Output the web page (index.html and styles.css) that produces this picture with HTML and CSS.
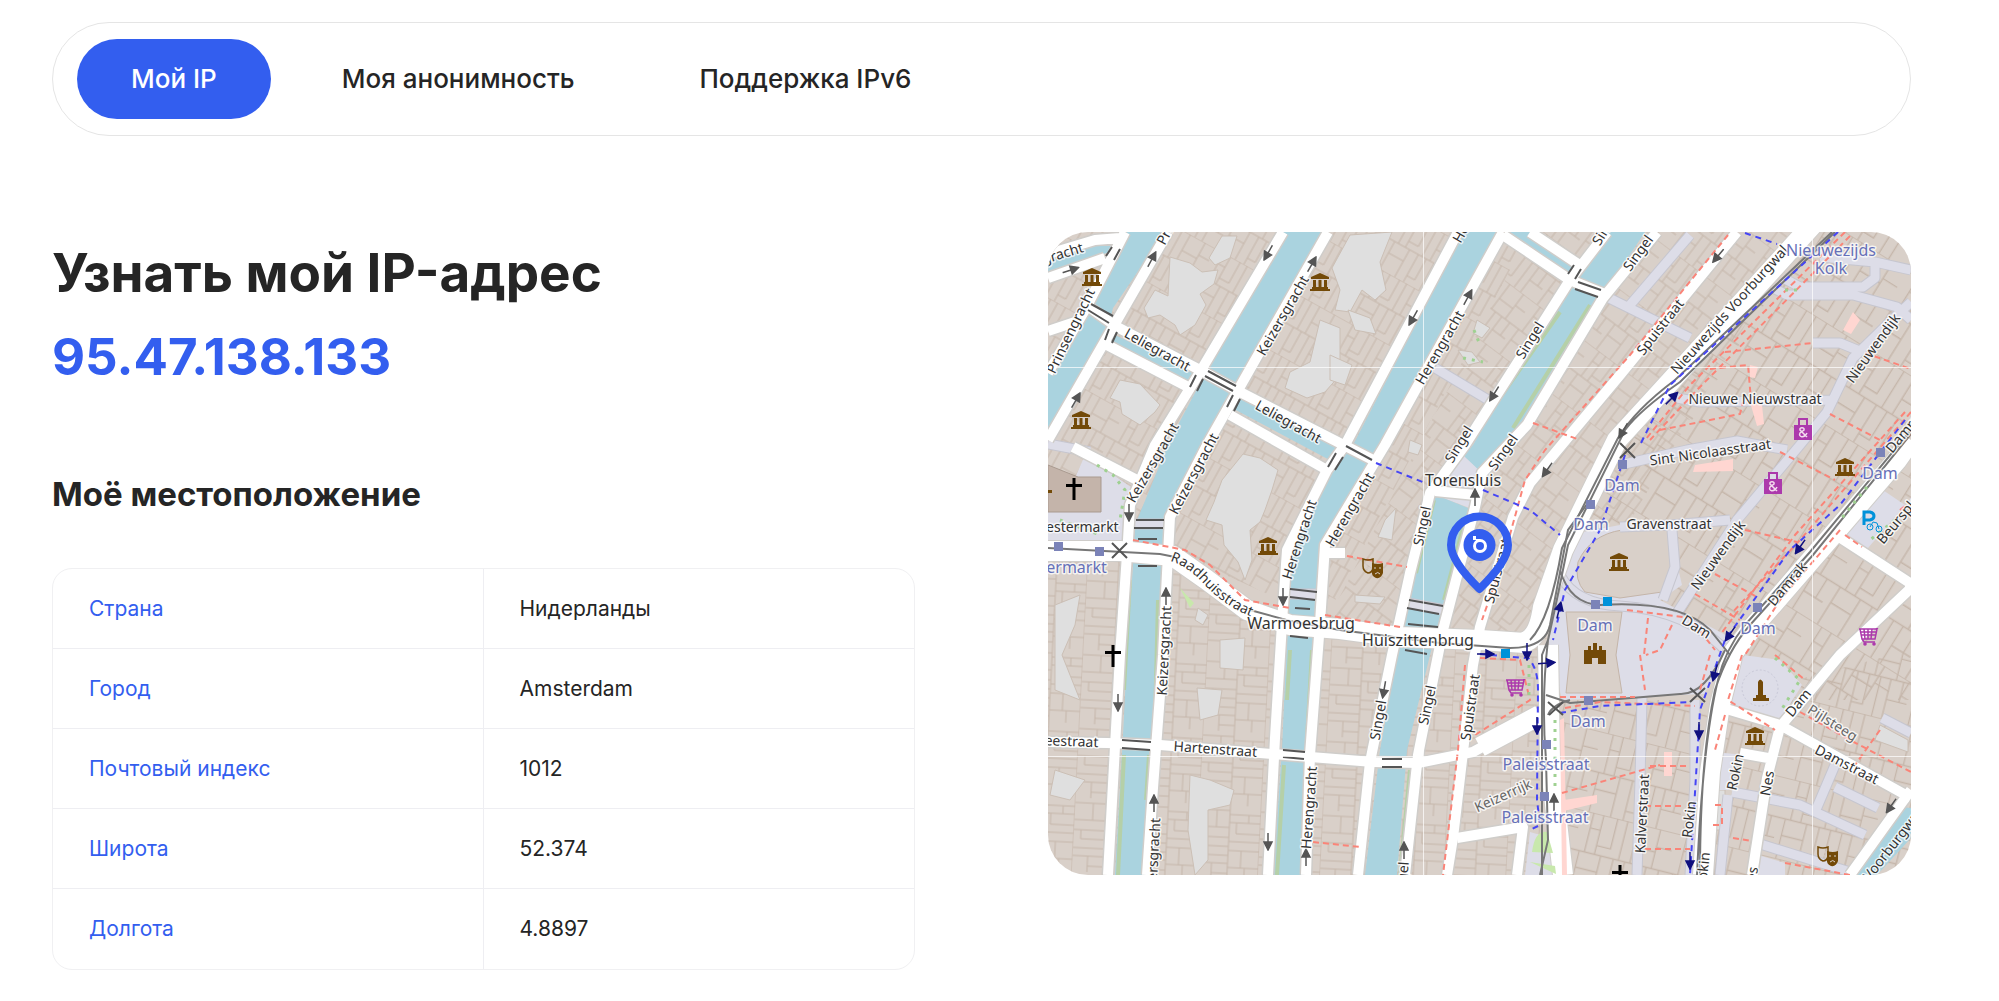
FILE: index.html
```html
<!DOCTYPE html>
<html lang="ru">
<head>
<meta charset="utf-8">
<meta name="viewport" content="width=device-width, initial-scale=1">
<title>Мой IP</title>
<link rel="stylesheet" href="styles.css">
</head>
<body>
<div class="page">
  <nav class="tabs">
    <a class="tab tab-active" href="#ip" aria-current="page">Мой IP</a>
    <a class="tab" href="#anonymity">Моя анонимность</a>
    <a class="tab" href="#ipv6">Поддержка IPv6</a>
  </nav>
  <main class="content">
    <section class="info">
      <h1 class="title">Узнать мой IP-адрес</h1>
      <p class="ip">95.47.138.133</p>
      <h2 class="subtitle">Моё местоположение</h2>
      <table class="facts">
        <tr><th scope="row">Страна</th><td>Нидерланды</td></tr>
        <tr><th scope="row">Город</th><td>Amsterdam</td></tr>
        <tr><th scope="row">Почтовый индекс</th><td>1012</td></tr>
        <tr><th scope="row">Широта</th><td>52.374</td></tr>
        <tr><th scope="row">Долгота</th><td>4.8897</td></tr>
      </table>
    </section>
    <svg class="map" viewBox="1048 232 863 643" role="img" aria-label="Amsterdam">
      <defs>
        <pattern id="houses" width="74" height="62" patternUnits="userSpaceOnUse">
          <path class="parcel" d="M0 0H74M0 31H74M9 0V31M17 0V31M28 0V24H17M36 0V31M45 0V31M45 18H62M62 0V31M9 12H17M62 14H74M5 31V62M5 44H22M22 31V62M32 31V62M41 31V55H32M50 31V62M58 31V62M58 47H74M68 31V47"/>
        </pattern>
        <pattern id="houses-nw" href="#houses" patternTransform="rotate(29)"/>
        <pattern id="houses-w" href="#houses" patternTransform="rotate(93)"/>
        <pattern id="houses-c" href="#houses" patternTransform="rotate(37)"/>
        <pattern id="houses-e" href="#houses" patternTransform="scale(1.4) rotate(32)"/>
        <pattern id="houses-se" href="#houses" patternTransform="scale(1.3) rotate(14)"/>
        <symbol id="museum" viewBox="0 0 20 18"><path d="M10 0 19 4V6H1V4ZM3 7H6V14H3ZM8.500 7H11.500V14H8.500ZM14 7H17V14H14ZM2 14H18V16H20V18H0V16H2Z" fill="#734a08"/></symbol>
        <symbol id="cross" viewBox="0 0 16 22"><path d="M6.500 0H9.500V6H16V9H9.500V22H6.500V9H0V6H6.500Z" fill="#000"/></symbol>
        <symbol id="cart" viewBox="0 0 20 18"><path d="M0 1H17L19 0M1 1 3 11H16L18 1M2 4H17M2 7H17M5 1 6 11M9 1V11M13 1 12 11M3 11 5 14H16" fill="none" stroke="#ac39ac" stroke-width="1.500"/><circle cx="6" cy="16" r="1.800" fill="#ac39ac"/><circle cx="15" cy="16" r="1.800" fill="#ac39ac"/></symbol>
        <symbol id="bag" viewBox="0 0 18 22"><path d="M0 7H18V22H0Z" fill="#ac39ac"/><path d="M5 7V1H13V7" fill="none" stroke="#ac39ac" stroke-width="2"/><path d="M13 19 6 12C5 9 11 9 10 12L6 15C4 19 10 21 13 15" fill="none" stroke="#f3dcee" stroke-width="1.500"/></symbol>
        <symbol id="masks" viewBox="0 0 22 21"><path d="M1 1Q6 3 11 1V10Q10 15 6 15Q1 13 1 8Z" fill="none" stroke="#734a08" stroke-width="1.500"/><path d="M10 5Q16 7 21 5V15Q19 21 14 20Q9 18 10 13Z" fill="#734a08"/><path d="M12 10H14M17 10H19M13 16Q16 13 18 16M3 6H5M7 6H9M4 11Q6 9 8 10" stroke="#d9d0c9" fill="none"/></symbol>
        <symbol id="arrow" viewBox="-6 -9 12 18"><path d="M0 9V0M0-8 4 0H-4Z" fill="currentColor" stroke="currentColor" stroke-width="1.500"/></symbol>
        <path id="raadhuis" d="M1170 561Q1187 566 1203 583Q1224 606 1252 617L1280 622"/>
        <path id="damstraat" d="M1814 753Q1845 769 1890 792"/>
        <path id="ped" d="M1911 302 1897 315 1853 358 1827 412 1800 445 1737 520 1677 613M1783 278 1800 287H1863L1875 278V262M1820 257 1875 262 1911 270M1773 288 1787 295H1853L1897 307 1911 320M1813 343H1840L1862 352M1677 398 1700 402 1833 400M1690 235 1630 305M1607 297 1690 338M1620 465 1687 450 1737 441 1787 450M1620 527 1670 525 1730 520M1672 530 1675 567 1663 600M1435 368 1490 401M1642 698 1640 780 1637 875M1695 700 1695 780 1690 875M1728 795 1720 875M1732 792 1800 805 1865 835M1835 765 1815 812M1835 787 1878 808M1757 843 1850 872M1882 718 1911 733M1560 575Q1575 604 1620 606 1690 610 1730 655M1048 444 1090 452M1130 524H1170M1290 594H1320M1408 603 1445 610"/>
        <g id="streets">
          <path d="M1125 232 1085 310 1048 373M1168 232 1116 322 1048 440M1090 308 1117 327 1200 370 1240 392 1373 460M1107 345 1190 388M1230 415 1327 470M1048 278 1105 258M1048 254 1095 240 1120 238M1048 331 1075 322"/>
          <path d="M1283 232 1200 372 1155 445 1130 505 1128 540 1120 655 1108 875M1328 232 1237 392 1207 445 1170 517 1167 573 1163 655 1153 788 1147 875"/>
          <path d="M1458 232 1345 445 1327 470 1287 550 1283 607 1275 738 1268 875M1503 232 1385 445 1325 545 1320 623 1310 755 1306 875"/>
          <path d="M1607 232 1570 280 1465 445 1430 493 1410 573 1392 655 1370 762 1358 875M1657 232 1603 298 1527 425 1482 473 1475 507 1443 630 1418 755 1405 875"/>
          <path d="M1503 235 1570 280 1607 295M1530 232 1578 264M1737 232 1620 375 1530 483 1513 517 1480 627 1473 665 1463 752 1453 838 1447 875"/>
          <path d="M1048 742 1107 743 1160 745 1273 754 1373 762 1418 763 1473 752 1537 717M1457 838 1523 827 1517 875M1073 447 1137 480M1325 553H1345M1435 491 1476 495"/>
          <path d="M1833 533 1910 583V589L1840 655 1780 727 1767 778 1752 875M1723 708 1780 725 1911 798M1911 790 1850 875M1740 753 1768 758"/>
        </g>
        <path id="main" d="M1815 222 1670 382 1617 440 1563 550 1543 607Q1538 642 1520 643M1048 551H1120L1173 556 1207 580 1247 610 1290 625 1340 629 1400 637 1480 640 1525 643M1540 715 1480 747M1548 645 1550 760 1563 875M1911 440 1897 460 1837 530 1753 627 1733 653 1720 705 1710 772 1703 875"/>
      </defs>

      <rect class="land" x="1048" y="232" width="863" height="643"/>
      <g>
        <path fill="url(#houses-nw)" d="M1048 232H1530L1325 620 1170 550 1048 530Z"/>
        <path fill="url(#houses-w)" d="M1048 560H1170L1250 620 1540 645V875H1048Z"/>
        <path fill="url(#houses-c)" d="M1530 232H1800L1560 640 1325 625Z"/>
        <path fill="url(#houses-e)" d="M1800 232H1911V700H1730L1680 610 1560 590 1620 430Z"/>
        <path fill="url(#houses-se)" d="M1550 700H1720L1911 650V875H1550Z"/>
      </g>

      <g class="yard">
        <path d="M1170 257 1190 263 1202 272 1218 270 1214 284 1200 294 1206 305 1195 325 1180 335 1175 325 1160 315 1148 318 1144 308 1155 290 1168 296ZM1222 236H1237L1230 258 1215 265 1209 258Z"/>
        <path d="M1120 380 1140 384 1160 405 1155 412 1140 425 1122 414 1120 402 1110 398Z"/>
        <path d="M1320 320 1340 328V375L1325 392 1307 398 1285 388 1290 372 1310 362Z"/>
        <path d="M1350 235 1392 232 1380 262 1386 290 1375 300 1362 290 1350 312 1335 310 1340 290 1332 268Z"/>
        <path d="M1348 310 1370 318 1376 334 1355 330ZM1330 355 1352 365 1345 385 1330 380Z"/>
        <path d="M1243 454 1260 458 1278 470 1272 490 1265 510 1260 522 1250 530 1252 560 1245 580 1238 562 1224 545 1222 525 1206 520 1214 502 1222 480Z"/>
        <path d="M1055 605 1080 595 1075 625 1062 655 1080 700 1055 690ZM1198 608 1208 615 1203 625 1195 620ZM1220 640 1245 638 1243 670 1220 668Z"/>
        <path d="M1197 688 1222 690 1218 715 1200 720ZM1190 775 1210 780 1234 790 1230 805 1208 810 1208 860 1195 875 1188 830ZM1055 770 1085 780 1070 800 1050 795Z"/>
        <path d="M1385 520 1396 508 1392 540 1378 537ZM1355 595 1385 597 1380 604 1355 602ZM1410 440 1422 445 1418 455 1408 452Z"/>
        <path d="M1477 320 1490 328 1482 338 1473 333ZM1458 350 1472 352 1480 362 1468 365Z"/>
        <path d="M1880 725 1908 740V752L1875 740ZM1710 790H1725V830H1710Z"/>
      </g>

      <g class="square">
        <path d="M1085 455 1135 490 1130 540 1048 540V510H1100V478H1075Z"/>
        <path d="M1463 455 1484 474 1475 510 1435 495Z"/>
        <path d="M1567 535 1620 525H1668L1682 585 1660 600 1735 640 1727 655 1704 694 1562 700 1548 640Z"/>
        <path d="M1743 655 1780 660 1802 685 1780 720 1725 706Z"/>
        <path d="M1868 480 1905 505 1862 555 1838 530Z"/>
        <path d="M1713 752 1735 754 1728 790H1712ZM1758 855 1785 863V875H1754ZM1530 832 1558 840 1560 875H1525Z"/>
      </g>
      <path class="block" d="M1578 562Q1590 535 1622 530H1668L1674 567 1662 592 1620 598 1585 592Q1574 580 1578 562Z"/>
      <path class="block" d="M1566 612H1622L1616 655 1622 693H1566L1570 655Z"/>
      <path class="church" d="M1048 465 1078 477H1101V512H1048Z"/>

      <g class="water">
        <path d="M1127 232H1165L1113 308 1105 340 1048 434V370L1090 308ZM1048 262 1115 236 1112 251 1048 274Z"/>
        <path d="M1113 334 1193 373 1188 387 1106 347ZM1236 393 1362 458 1354 473 1230 407Z"/>
        <path d="M1280 232H1322L1247 368 1203 440 1166 525 1162 570 1158 655 1152 735 1147 875H1115L1123 735 1127 655 1133 565 1135 525 1170 440Z"/>
        <path d="M1463 232H1497L1430 368 1382 445 1347 505 1323 545 1317 590 1312 655 1307 750 1303 875H1273L1282 750 1286 655 1290 587 1297 530 1337 457 1353 445Z"/>
        <path d="M1607 232H1645L1600 300 1560 368 1510 445 1483 474 1463 455 1473 445 1517 368 1570 290Z"/>
        <path d="M1436 495 1473 510 1458 560 1445 600 1430 655 1407 750 1397 875H1365L1380 750 1397 655 1410 595 1427 530Z"/>
        <path d="M1510 232H1530L1580 266 1572 278Z"/>
        <path d="M1850 875 1900 807 1911 808V838L1877 875Z"/>
      </g>
      <g class="quay">
        <path d="M1560 312 1483 422M1590 305 1513 428M1130 580 1124 690M1158 600 1155 720M1290 650 1287 700M1312 650 1307 740M1124 755 1118 875M1149 755 1146 800M1284 765 1277 875M1434 500 1416 573M1465 520 1444 600M1410 770 1400 875"/>
      </g>

      <use href="#ped" class="ped-case"/>
      <use href="#ped" class="ped"/>
      <use href="#streets" class="street-case"/>
      <use href="#main" class="main-case"/>
      <use href="#streets" class="street"/>
      <use href="#main" class="main"/>

      <path class="pink" d="M1853 312 1860 320 1851 334 1843 330ZM1750 365 1758 367 1755 378 1750 377ZM1750 402 1762 405 1764 424 1757 426ZM1695 465 1733 459V471L1693 472ZM1560 720 1564 718 1567 875H1562ZM1564 800 1597 795V803L1564 811ZM1664 752H1672V776H1664Z"/>
      <path class="park" d="M1532 852Q1535 830 1547 832L1553 853ZM1530 862 1555 866 1556 874ZM1180 588 1194 603 1190 608Z"/>

      <g class="rail">
        <path d="M1835 232 1680 382Q1640 410 1625 430L1568 545Q1555 610 1548 640 1541 700 1546 760L1548 840 1540 875M1832 232 1675 380Q1635 410 1618 438L1562 548Q1550 620 1530 640M1548 640 1542 655V875"/>
        <path d="M1048 548 1160 554 1175 557M1250 610 1290 621 1340 630 1440 643 1510 648Q1545 648 1550 625L1568 530 1590 500M1560 570Q1570 604 1600 605 1680 600 1710 630L1730 655"/>
        <path d="M1911 430 1810 552 1745 625Q1725 650 1718 680 1703 740 1697 875M1911 434 1813 555 1750 625Q1728 650 1715 690 1700 760 1700 875M1546 695 1570 703 1680 694Q1705 695 1725 650M1548 715Q1552 705 1570 700"/>
      </g>
      <g class="bridge">
        <path d="M1091 304 1113 316M1088 310 1109 323M1112 247 1106 256M1120 249 1114 260M1109 329 1105 340M1117 332 1112 343M1196 375 1190 387M1203 379 1197 391M1208 371 1236 386M1205 376 1233 391M1233 395 1227 407M1240 399 1234 411"/>
        <path d="M1574 265 1568 274M1581 269 1575 279M1578 282 1601 290M1575 289 1598 297M1346 446 1372 460M1336 453 1328 467M1343 457 1335 470M1136 520H1164M1134 528H1163M1138 539H1157M1138 566H1157M1290 589 1317 592M1290 597 1315 600M1295 608 1310 609M1290 636 1308 638"/>
        <path d="M1409 600 1443 606M1407 608 1439 614M1408 624 1438 627M1405 650 1427 654M1122 740 1151 742M1122 748 1150 750M1283 750 1305 752M1283 757 1304 759M1382 759H1402M1382 767H1402"/>
      </g>
      <g class="foot">
        <path d="M1728 235 1630 355 1545 450 1525 480 1503 560 1482 620M1465 665 1458 750 1443 875M1845 232 1690 385 1645 440M1850 236 1697 390 1650 440M1533 423 1580 440M1725 352 1813 343M1710 369 1748 365 1751 400M1660 430 1740 414 1743 402M1830 414 1880 440M1865 353 1911 369M1780 452 1835 480M1745 530 1797 542M1715 574 1757 597M1695 594 1740 620"/>
        <path d="M1911 412 1800 540 1730 615M1905 412 1795 535 1720 635M1840 530 1780 600 1745 655M1133 540 1185 550 1210 565 1245 600 1290 608M1325 615 1400 627M1347 556 1407 567M1480 658 1520 660 1530 700 1475 735M1560 697H1635M1565 708 1600 702 1695 706M1627 610 1690 618 1715 650M1648 618 1644 655M1672 625 1660 650 1646 655M1640 655 1645 690M1710 655 1700 690"/>
        <path d="M1742 655 1728 700 1775 730M1775 655 1805 680M1800 712 1850 740 1911 772M1880 730 1855 765M1562 793 1660 765M1650 766H1690M1645 806H1685M1645 849H1690M1733 838 1752 841M1785 863 1850 875M1313 842 1360 847M1725 715 1715 750M1845 535 1862 547M1900 510 1905 506M1715 805H1722V825H1713"/>
      </g>
      <g class="cycle">
        <path d="M1745 233 1777 244M1838 232 1780 285 1670 385 1640 445M1376 463 1425 483M1483 490 1530 510 1560 535M1625 455 1600 530 1565 590 1553 640M1905 420 1840 505 1790 550 1725 640 1700 710 1690 875M1525 655Q1538 665 1538 690L1537 800 1540 825 1530 830M1560 713 1600 706 1690 702M1480 654 1525 658"/>
      </g>

      <g class="trees">
        <path d="M1097 465 1113 475 1125 490 1120 520M1060 520 1100 535M1867 487 1840 520M1895 520 1870 540M1775 658 1800 680 1780 712M1785 290H1802M1474 330 1480 345M1463 358 1483 362M1529 665V700M1555 720V790"/>
      </g>

      <g class="stops">
        <path d="M1054 542H1063V551H1054ZM1095 547H1104V556H1095ZM1618 460H1627V469H1618ZM1586 500H1595V509H1586ZM1591 600H1600V609H1591ZM1584 696H1593V705H1584ZM1542 740H1551V749H1542ZM1540 792H1549V801H1540ZM1753 603H1762V612H1753ZM1876 448H1885V457H1876Z"/>
        <path class="stop-bus" d="M1603 597H1612V606H1603ZM1501 649H1510V658H1501Z"/>
      </g>
      <path class="crossing" d="M1112 543 1127 558M1127 543 1112 558M1620 443 1635 458M1635 443 1620 458M1548 702 1563 715M1563 702 1549 715M1690 688 1705 702M1705 688 1690 702"/>

      <g class="tiles"><path d="M1048 367.500H1911M1048 756.500H1911M1423.500 232V875M1812.500 232V875"/></g>

      <g class="arrows">
        <use href="#arrow" x="-6" y="-9" width="12" height="18" transform="translate(1071 270) rotate(72)"/>
        <use href="#arrow" x="-6" y="-9" width="12" height="18" transform="translate(1152 259) rotate(28)"/>
        <use href="#arrow" x="-6" y="-9" width="12" height="18" transform="translate(1076 400) rotate(30)"/>
        <use href="#arrow" x="-6" y="-9" width="12" height="18" transform="translate(1268 253) rotate(210)"/>
        <use href="#arrow" x="-6" y="-9" width="12" height="18" transform="translate(1312 264) rotate(30)"/>
        <use href="#arrow" x="-6" y="-9" width="12" height="18" transform="translate(1413 318) rotate(210)"/>
        <use href="#arrow" x="-6" y="-9" width="12" height="18" transform="translate(1468 297) rotate(28)"/>
        <use href="#arrow" x="-6" y="-9" width="12" height="18" transform="translate(1494 394) rotate(212)"/>
        <use href="#arrow" x="-6" y="-9" width="12" height="18" transform="translate(1718 256) rotate(220)"/>
        <use href="#arrow" x="-6" y="-9" width="12" height="18" transform="translate(1623 431) rotate(210)"/>
        <use href="#arrow" x="-6" y="-9" width="12" height="18" transform="translate(1547 470) rotate(215)"/>
        <use href="#arrow" x="-6" y="-9" width="12" height="18" transform="translate(1129 513) rotate(180)"/>
        <use href="#arrow" x="-6" y="-9" width="12" height="18" transform="translate(1166 596)"/>
        <use href="#arrow" x="-6" y="-9" width="12" height="18" transform="translate(1283 597) rotate(180)"/>
        <use href="#arrow" x="-6" y="-9" width="12" height="18" transform="translate(1118 703) rotate(180)"/>
        <use href="#arrow" x="-6" y="-9" width="12" height="18" transform="translate(1154 803)"/>
        <use href="#arrow" x="-6" y="-9" width="12" height="18" transform="translate(1268 842) rotate(180)"/>
        <use href="#arrow" x="-6" y="-9" width="12" height="18" transform="translate(1306 857)"/>
        <use href="#arrow" x="-6" y="-9" width="12" height="18" transform="translate(1384 690) rotate(190)"/>
        <use href="#arrow" x="-6" y="-9" width="12" height="18" transform="translate(1404 850)"/>
        <use href="#arrow" x="-6" y="-9" width="12" height="18" transform="translate(1554 802)"/>
        <use href="#arrow" x="-6" y="-9" width="12" height="18" transform="translate(1475 497)"/>
        <use href="#arrow" x="-6" y="-9" width="12" height="18" transform="translate(1891 806) rotate(215)"/>
      </g>
      <g class="arrows-blue">
        <use href="#arrow" x="-6" y="-9" width="12" height="18" transform="translate(1672 398) rotate(45)"/>
        <use href="#arrow" x="-6" y="-9" width="12" height="18" transform="translate(1559 610) rotate(14)"/>
        <use href="#arrow" x="-6" y="-9" width="12" height="18" transform="translate(1486 654) rotate(90)"/>
        <use href="#arrow" x="-6" y="-9" width="12" height="18" transform="translate(1527 652) rotate(180)"/>
        <use href="#arrow" x="-6" y="-9" width="12" height="18" transform="translate(1547 663) rotate(85)"/>
        <use href="#arrow" x="-6" y="-9" width="12" height="18" transform="translate(1537 726) rotate(180)"/>
        <use href="#arrow" x="-6" y="-9" width="12" height="18" transform="translate(1800 547) rotate(215)"/>
        <use href="#arrow" x="-6" y="-9" width="12" height="18" transform="translate(1730 634) rotate(215)"/>
        <use href="#arrow" x="-6" y="-9" width="12" height="18" transform="translate(1715 673) rotate(195)"/>
        <use href="#arrow" x="-6" y="-9" width="12" height="18" transform="translate(1699 731) rotate(180)"/>
        <use href="#arrow" x="-6" y="-9" width="12" height="18" transform="translate(1690 861) rotate(180)"/>
      </g>

      <use href="#museum" x="1082" y="268" width="20" height="18"/>
      <use href="#museum" x="1310" y="273" width="20" height="18"/>
      <use href="#museum" x="1071" y="411" width="20" height="18"/>
      <use href="#museum" x="1258" y="537" width="20" height="18"/>
      <use href="#museum" x="1609" y="553" width="20" height="18"/>
      <use href="#museum" x="1835" y="458" width="20" height="18"/>
      <use href="#museum" x="1745" y="727" width="20" height="18"/>
      <use href="#cross" x="1066" y="478" width="16" height="22"/>
      <use href="#cross" x="1105" y="645" width="16" height="22"/>
      <use href="#cross" x="1612" y="865" width="16" height="22"/>
      <use href="#cart" x="1506" y="679" width="20" height="18"/>
      <use href="#cart" x="1859" y="628" width="20" height="18"/>
      <use href="#bag" x="1794" y="418" width="18" height="22"/>
      <use href="#bag" x="1764" y="472" width="18" height="22"/>
      <use href="#masks" x="1362" y="558" width="22" height="21"/>
      <use href="#masks" x="1817" y="846" width="22" height="21"/>
      <path fill="#734a08" d="M1584 650H1588V646H1591V650H1593V643H1597V650H1599V646H1602V650H1606V664H1598V658H1592V664H1584ZM1758 682Q1760 677 1763 682V695H1766V698H1769V701H1753V698H1756V695H1758ZM1048 490H1052V493H1048Z"/>
      <circle cx="1760" cy="688" r="18" fill="none" stroke="#c9c9d8" stroke-dasharray="2 2"/>
      <path d="M1864 525V512H1870Q1874 513 1874 516T1870 520H1865" fill="none" stroke="#0092da" stroke-width="3"/>
      <g fill="none" stroke="#0092da"><circle cx="1870" cy="527" r="3"/><circle cx="1879" cy="529" r="3"/><path d="M1870 527 1873 522 1877 523 1879 529"/></g>

      <g class="labels">
        <text transform="translate(1064 258) rotate(-17)">gracht</text>
        <text transform="translate(1169 238) rotate(-62)">Pri</text>
        <text transform="translate(1075 333) rotate(-64)">Prinsengracht</text>
        <text transform="translate(1155 354) rotate(29)">Leliegracht</text>
        <text transform="translate(1286 426) rotate(29)">Leliegracht</text>
        <text transform="translate(1287 318) rotate(-60)">Keizersgracht</text>
        <text transform="translate(1157 465) rotate(-60)">Keizersgracht</text>
        <text transform="translate(1198 476) rotate(-62)">Keizersgracht</text>
        <text transform="translate(1169 651) rotate(-87)">Keizersgracht</text>
        <text transform="translate(1158 863) rotate(-87)">Keizersgracht</text>
        <text transform="translate(1444 350) rotate(-60)">Herengracht</text>
        <text transform="translate(1465 236) rotate(-60)">He</text>
        <text transform="translate(1354 512) rotate(-60)">Herengracht</text>
        <text transform="translate(1304 541) rotate(-72)">Herengracht</text>
        <text transform="translate(1314 808) rotate(-86)">Herengracht</text>
        <text transform="translate(1534 343) rotate(-58)">Singel</text>
        <text transform="translate(1605 238) rotate(-58)">Sin</text>
        <text transform="translate(1642 256) rotate(-54)">Singel</text>
        <text transform="translate(1463 447) rotate(-58)">Singel</text>
        <text transform="translate(1507 455) rotate(-55)">Singel</text>
        <text transform="translate(1427 527) rotate(-78)">Singel</text>
        <text transform="translate(1383 721) rotate(-80)">Singel</text>
        <text transform="translate(1432 706) rotate(-78)">Singel</text>
        <text transform="translate(1407 882) rotate(-85)">Singel</text>
        <text transform="translate(1664 330) rotate(-52)">Spuistraat</text>
        <text transform="translate(1502 572) rotate(-75)">Spuistraat</text>
        <text transform="translate(1475 708) rotate(-82)">Spuistraat</text>
        <text transform="translate(1733 313) rotate(-48)">Nieuwezijds Voorburgwal</text>
        <text transform="translate(1755 404)">Nieuwe Nieuwstraat</text>
        <text transform="translate(1711 457) rotate(-8)">Sint Nicolaasstraat</text>
        <text transform="translate(1877 351) rotate(-54)">Nieuwendijk</text>
        <text transform="translate(1722 558) rotate(-54)">Nieuwendijk</text>
        <text transform="translate(1669 529)">Gravenstraat</text>
        <text transform="translate(1791 587) rotate(-50)">Damrak</text>
        <text transform="translate(1909 434) rotate(-50)">Damrak</text>
        <text transform="translate(1906 518) rotate(-50)">Beursplein</text>
        <text transform="translate(1694 631) rotate(32)">Dam</text>
        <text transform="translate(1802 706) rotate(-50)">Dam</text>
        <text class="muted" transform="translate(1830 727) rotate(32)">Pijlsteeg</text>
        <text class="start"><textPath href="#damstraat">Damstraat</textPath></text>
        <text transform="translate(1647 814) rotate(-87)">Kalverstraat</text>
        <text transform="translate(1694 820) rotate(-83)">Rokin</text>
        <text transform="translate(1740 773) rotate(-78)">Rokin</text>
        <text transform="translate(1708 871) rotate(-84)">Rokin</text>
        <text transform="translate(1772 784) rotate(-80)">Nes</text>
        <text transform="translate(1756 880) rotate(-80)">Nes</text>
        <text transform="translate(1896 848) rotate(-52)">Voorburgwal</text>
        <text class="muted" transform="translate(1505 800) rotate(-24)">Keizerrijk</text>
        <text transform="translate(1215 754) rotate(4)">Hartenstraat</text>
        <text transform="translate(1067 746) rotate(2)">Reestraat</text>
        <text transform="translate(1076 532)">Westermarkt</text>
        <text class="start"><textPath href="#raadhuis">Raadhuisstraat</textPath></text>
      </g>
      <g class="labels labels-place">
        <text x="1463" y="486">Torensluis</text>
        <text x="1301" y="629">Warmoesbrug</text>
        <text x="1418" y="646">Huiszittenbrug</text>
      </g>
      <g class="labels labels-stop">
        <text x="1831" y="256">Nieuwezijds</text>
        <text x="1831" y="274">Kolk</text>
        <text x="1622" y="491">Dam</text>
        <text x="1591" y="530">Dam</text>
        <text x="1595" y="631">Dam</text>
        <text x="1588" y="727">Dam</text>
        <text x="1880" y="479">Dam</text>
        <text x="1758" y="634">Dam</text>
        <text x="1546" y="770">Paleisstraat</text>
        <text x="1545" y="823">Paleisstraat</text>
        <text x="1058" y="573">Westermarkt</text>
      </g>

      <path class="pin-body" d="M1479.500 589Q1451 561 1451 545A28.500 28.500 0 0 1 1508 545Q1508 561 1479.500 589Z"/>
      <circle cx="1479.500" cy="545" r="16" fill="#335eef"/>
      <circle cx="1480" cy="546" r="5.500" fill="none" stroke="#fff" stroke-width="3"/>
      <path d="M1473 536H1476V540H1473ZM1476 539H1480V542H1476Z" fill="#fff"/>
    </svg>
  </main>
</div>
</body>
</html>
```
FILE: styles.css
```css
* { box-sizing: border-box; }
body {
  margin: 0;
  background: #fff;
  color: #252525;
  font-family: Inter, "Noto Sans", sans-serif;
}
.page { padding: 22px 88px 32px 52px; }
.tabs {
  display: flex;
  gap: 17px;
  padding: 16px 24px;
  border: 1px solid #e5e5e5;
  border-radius: 57px;
}
.tab {
  padding: 0 54px;
  border-radius: 40px;
  color: inherit;
  font-size: 26px;
  font-weight: 500;
  line-height: 80px;
  text-decoration: none;
}
.tab-active { background: #335eef; color: #fff; }
.content {
  display: grid;
  grid-template-columns: 1fr 1fr;
  gap: 133px;
  align-items: start;
  margin-top: 96px;
}
.title, .ip {
  margin: 0;
  font-size: 53px;
  font-weight: 700;
  line-height: 83px;
}
.ip { color: #335eef; font-size: 51px; }
.subtitle {
  margin: 72px 0 50px;
  font-size: 33px;
  font-weight: 700;
  line-height: 48px;
}
.facts {
  width: 100%;
  table-layout: fixed;
  border: 1px solid #f0f0f2;
  border-radius: 20px;
  border-spacing: 0;
}
.facts th, .facts td {
  width: 50%;
  height: 80px;
  padding: 0 36px;
  border-bottom: 1px solid #eeeef2;
  font-size: 21px;
  font-weight: 400;
  line-height: 32px;
  text-align: left;
}
.facts th { border-right: 1px solid #eeeef2; color: #335eef; }
.facts tr:last-child > * { border-bottom: 0; }

.map {
  display: block;
  width: 100%;
  height: auto;
  border-radius: 40px;
  font-family: "Noto Sans", sans-serif;
}
.land, .block { fill: #d9d0c9; }
.block { stroke: #c4b5a9; }
.church { fill: #c4b4aa; stroke: #a99a8f; }
.parcel { fill: none; stroke: #c5b6aa; }
.yard { fill: #dfdfdf; stroke: #cbbfb5; }
.square { fill: #dddde8; }
.water { fill: #aad3df; }
.quay { fill: none; stroke: #b5d0a8; stroke-width: 4; }
.ped-case, .ped, .street-case, .street, .main-case, .main {
  fill: none;
  stroke-linejoin: round;
}
.ped-case { stroke: #c6c6cf; stroke-width: 11; }
.ped { stroke: #dddde8; stroke-width: 9; }
.street-case { stroke: #cfcdca; stroke-width: 13; }
.street { stroke: #fff; stroke-width: 10; }
.main-case { stroke: #cfcdca; stroke-width: 22; }
.main { stroke: #fff; stroke-width: 20; }
.pink { fill: #ffd6d1; }
.park { fill: #c8e8ac; }
.rail { fill: none; stroke: #777; stroke-width: 2; }
.bridge { stroke: #555; stroke-width: 2; }
.foot { fill: none; stroke: #fa8478; stroke-width: 2; stroke-dasharray: 6 4; }
.cycle { fill: none; stroke: #4545f5; stroke-width: 2; stroke-dasharray: 6 5; }
.trees { fill: none; stroke: #9fd191; stroke-width: 3; stroke-dasharray: 3 6; }
.stops { fill: #7b83b8; }
.stop-bus { fill: #0092da; }
.crossing { stroke: #555; stroke-width: 2; }
.tiles { stroke: #fff; stroke-opacity: 0.7; }
.arrows { color: #555; }
.arrows-blue { color: #10107e; }
.labels {
  fill: #333;
  stroke: #fff;
  stroke-opacity: 0.75;
  stroke-width: 3;
  stroke-linejoin: round;
  paint-order: stroke;
  font-size: 14px;
  text-anchor: middle;
}
.start { text-anchor: start; }
.muted { fill: #666; }
.labels-place { font-size: 16px; }
.labels-stop { font-size: 16px; fill: #6670b8; }
.pin-body {
  fill: none;
  stroke: #335eef;
  stroke-width: 8;
  stroke-linejoin: round;
}
```
